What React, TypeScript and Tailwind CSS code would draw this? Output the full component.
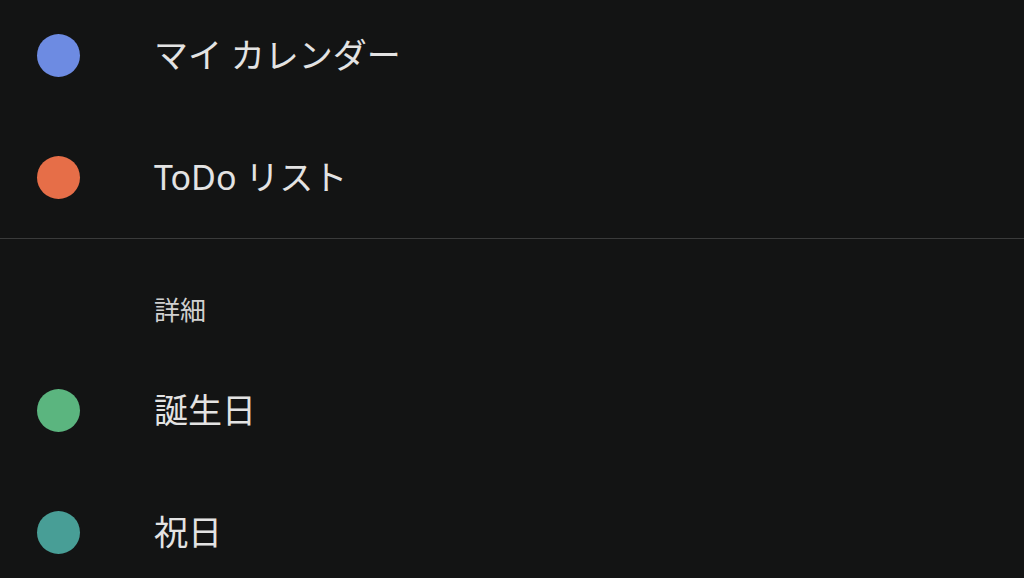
import React from 'react'

interface CalendarItem {
  label: string
  color: string
}

const myCalendars: CalendarItem[] = [
  { label: 'マイ カレンダー', color: 'bg-[#6d8be2]' },
  { label: 'ToDo リスト', color: 'bg-[#e66e48]' },
]

const moreCalendars: CalendarItem[] = [
  { label: '誕生日', color: 'bg-[#5bb57f]' },
  { label: '祝日', color: 'bg-[#489e96]' },
]

function Row({ item }: { item: CalendarItem }) {
  return (
    <div className="flex items-center h-[122px]">
      <div className="w-[154px] flex pl-[37px]">
        <span className={`w-[43px] h-[43px] rounded-full ${item.color}`}></span>
      </div>
      <span className="text-[34px] text-[#e3e3e3] leading-none">{item.label}</span>
    </div>
  )
}

export default function App() {
  return (
    <div
      className="w-[1024px] h-[578px] overflow-hidden bg-[#131414]"
      style={{ fontFamily: '"Noto Sans", "Noto Sans CJK JP", sans-serif' }}
    >
      <div className="-mt-[6px]">
        {myCalendars.map((c) => (
          <Row key={c.label} item={c} />
        ))}
      </div>
      <div className="h-px bg-[#3a3b3b]"></div>
      {/* 詳細 */}
      <div className="h-[110px] pl-[154px] flex items-center pt-[32px]">
        <span className="text-[26px] text-[#d0d0d0] leading-none">詳細</span>
      </div>
      {moreCalendars.map((c) => (
        <Row key={c.label} item={c} />
      ))}
    </div>
  )
}
